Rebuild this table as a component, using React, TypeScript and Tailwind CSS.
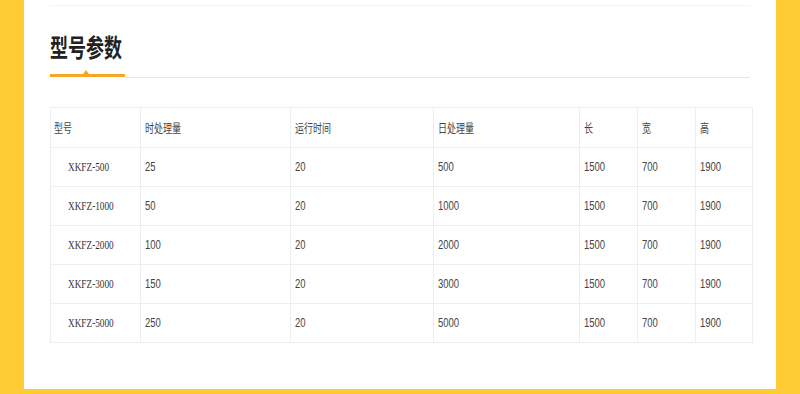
const rows = [
  ["XKFZ-500", "25", "20", "500", "1500", "700", "1900"],
  ["XKFZ-1000", "50", "20", "1000", "1500", "700", "1900"],
  ["XKFZ-2000", "100", "20", "2000", "1500", "700", "1900"],
  ["XKFZ-3000", "150", "20", "3000", "1500", "700", "1900"],
  ["XKFZ-5000", "250", "20", "5000", "1500", "700", "1900"],
];

const heads = ["型号", "时处理量", "运行时间", "日处理量", "长", "宽", "高"];
const widths = ["w-[90px]", "w-[150px]", "w-[143px]", "w-[146px]", "w-[58px]", "w-[58px]", "w-[57px]"];

export default function App() {
  return (
    <div className="w-[800px] h-[394px] bg-[#ffcc33] px-[24px] overflow-hidden">
      <div className="h-[389px] bg-white px-[26px] pt-[5px]">
        <div className="border-t border-[#f4f4f4] pt-[25px]">
          <div className="h-[30px] text-[25px] leading-[30px] font-bold text-[#222] font-['Noto_Sans_CJK_SC',sans-serif]">
            <span className="inline-block origin-left scale-x-[0.72]">型号参数</span>
          </div>
          <div className="mt-[13px] flex items-end">
            <div className="relative w-[75px] h-[3px] bg-[#f5a623]">
              <div className="absolute left-[33px] -top-[4px] w-0 h-0 border-x-[3px] border-x-transparent border-b-[4px] border-b-[#f5a623]" />
            </div>
            <div className="flex-1 h-px bg-[#e6e6e6] mb-[-1px]" />
          </div>
        </div>
        <table className="mt-[30px] w-[702px] border-collapse table-fixed text-[12px] text-[#444]">
          <thead>
            <tr className="h-[40px]">
              {heads.map((h, i) => (
                <th
                  key={h}
                  className={`${widths[i]} border border-[#eeeeee] font-normal text-left align-middle ${i === 0 ? "pl-[3px]" : "pl-[4px]"} font-['Noto_Sans_CJK_SC',sans-serif]`}
                >
                  <span className="inline-block origin-left scale-x-75">{h}</span>
                </th>
              ))}
            </tr>
          </thead>
          <tbody>
            {rows.map((r) => (
              <tr key={r[0]} className="h-[39px]">
                {r.map((c, i) => (
                  <td
                    key={i}
                    className={`border border-[#eeeeee] align-middle ${
                      i === 0
                        ? "pl-[17px] font-['Liberation_Serif',serif] text-[#333]"
                        : "pl-[4px] font-['Liberation_Sans',sans-serif]"
                    }`}
                  >
                    <span className={`inline-block origin-left ${i === 0 ? "scale-x-[0.77]" : "scale-x-[0.79]"}`}>{c}</span>
                  </td>
                ))}
              </tr>
            ))}
          </tbody>
        </table>
      </div>
    </div>
  );
}
